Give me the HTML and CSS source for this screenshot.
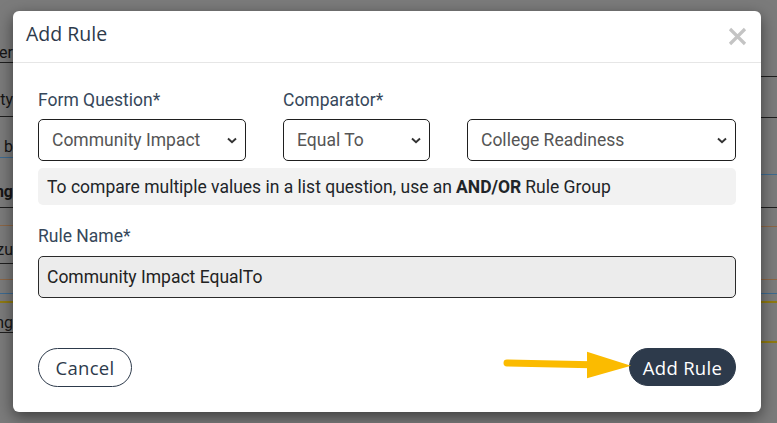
FILE: index.html
```html
<!DOCTYPE html>
<html lang="en">
<head>
  <meta charset="UTF-8" />
  <meta name="viewport" content="width=device-width, initial-scale=1.0"/>
  <title>Add Rule</title>
  <link rel="stylesheet" href="styles.css">
</head>
<body>

  <!-- page behind the dialog, mostly hidden -->
  <div class="page">
    <div class="col col-left">
      <div class="row r1"><span>Number</span></div>
      <div class="row r2"><span>County</span></div>
      <div class="row r3 blue"><span>To b</span></div>
      <div class="row r4"><b>Pending</b></div>
      <div class="row r5 orange"></div>
      <div class="row r6"><span>Azu</span></div>
      <div class="row r7 orange"></div>
      <div class="row r8 blue"></div>
      <div class="row r9 yellow"></div>
      <div class="row r10"><span>Pending</span></div>
    </div>
    <div class="col col-right">
      <div class="row q1"></div>
      <div class="row q2"></div>
      <div class="row q3 blue"></div>
      <div class="row q4"></div>
      <div class="row q5 orange"></div>
      <div class="row q6 orange"></div>
      <div class="row q7 blue"></div>
      <div class="row q8 yellow"></div>
      <div class="row q9 yellow"></div>
    </div>
  </div>

  <div class="modal">
    <div class="modal-header">
      <h4 class="modal-title">Add Rule</h4>
      <svg class="close" width="19" height="19" viewBox="0 0 19 19">
        <path d="M2 2 L17 17 M17 2 L2 17" stroke="#c4c4c4" stroke-width="3.2" />
      </svg>
    </div>

    <div class="modal-body">
      <div class="fields">
        <label class="label">Form Question*</label>
        <label class="label">Comparator*</label>
        <label class="label"></label>

        <div class="select">
          <span>Community Impact</span>
          <svg width="10" height="7" viewBox="0 0 10 7"><path d="M1 1.5 L5 5.3 L9 1.5" fill="none" stroke="#333" stroke-width="1.9"/></svg>
        </div>
        <div class="select">
          <span>Equal To</span>
          <svg width="10" height="7" viewBox="0 0 10 7"><path d="M1 1.5 L5 5.3 L9 1.5" fill="none" stroke="#333" stroke-width="1.9"/></svg>
        </div>
        <div class="select">
          <span>College Readiness</span>
          <svg width="10" height="7" viewBox="0 0 10 7"><path d="M1 1.5 L5 5.3 L9 1.5" fill="none" stroke="#333" stroke-width="1.9"/></svg>
        </div>
      </div>

      <div class="hint">To compare multiple values in a list question, use an <strong>AND/OR</strong> Rule Group</div>

      <label class="label name-label">Rule Name*</label>
      <div class="text-input">Community Impact EqualTo</div>
    </div>

    <div class="modal-footer">
      <button class="btn btn-outline">Cancel</button>
      <button class="btn btn-dark">Add Rule</button>

      <svg class="arrow" width="134" height="30" viewBox="0 0 134 30">
        <path d="M4 12 L88 13.7" stroke="#fbbb00" stroke-width="7" stroke-linecap="round" />
        <polygon points="84,0.7 128,14.7 84,27.3" fill="#fbbb00" />
      </svg>
    </div>
  </div>

</body>
</html>
```

FILE: styles.css
```css
body {
  margin: 0;
  width: 777px;
  height: 423px;
  overflow: hidden;
  background-color: #7b7b7b;
  font-family: Roboto, 'Liberation Sans', sans-serif;
  position: relative;
}

/* page behind the dialog */
.page {
  display: flex;
  justify-content: space-between;
  height: 423px;
}

.col {
  width: 16px;
  display: flex;
  flex-direction: column;
}

.col-left {
  width: 13px;
  overflow: hidden;
}

.row {
  box-sizing: border-box;
  border-bottom: 1px solid #1e1e1e;
  display: flex;
  align-items: flex-end;
  justify-content: flex-end;
  font-size: 16px;
  color: #151515;
  white-space: nowrap;
  flex-shrink: 0;
}

.row.blue { border-bottom-color: #3d6a90; }
.row.orange { border-bottom-color: #8c6646; }
.row.yellow { border-bottom: 2px solid #8f7a12; }

.r1 { height: 63px; padding-bottom: 0; }
.r2 { height: 54px; padding-bottom: 7px; }
.r3 { height: 41px; padding-bottom: 1px; }
.r4 { height: 50px; padding-bottom: 6px; }
.r5 { height: 18px; }
.r6 { height: 38px; padding-bottom: 4px; }
.r7 { height: 16px; }
.r8 { height: 14px; }
.r9 { height: 9px; }
.r10 { height: 30px; padding-bottom: 0; }

.q1 { height: 77px; }
.q2 { height: 41px; }
.q3 { height: 57px; }
.q4 { height: 33px; }
.q5 { height: 19px; }
.q6 { height: 53px; }
.q7 { height: 14px; }
.q8 { height: 9px; }
.q9 { height: 40px; }

/* dialog */
.modal {
  position: absolute;
  left: 13px;
  top: 11px;
  width: 748px;
  height: 401px;
  box-sizing: border-box;
  background-color: #ffffff;
  border-radius: 6px;
  box-shadow: 0 5px 15px rgba(0,0,0,0.5);
  display: flex;
  flex-direction: column;
}

.modal-header {
  display: flex;
  justify-content: space-between;
  align-items: center;
  padding: 9px 14px 14px 13px;
  border-bottom: 1px solid #e6e6e6;
}

.modal-title {
  margin: 0;
  font-family: 'Open Sans', sans-serif;
  font-weight: 400;
  font-size: 19.5px;
  line-height: 28px;
  color: #2d3a4b;
}

.close {
  margin-top: 5px;
}

.modal-body {
  padding: 25px 25px 0;
}

.fields {
  display: grid;
  grid-template-columns: 208px 147px 1fr;
  column-gap: 37px;
  row-gap: 7px;
}

.label {
  display: block;
  font-size: 17.5px;
  line-height: 24px;
  color: #36475a;
}

.select {
  height: 42px;
  box-sizing: border-box;
  border: 1px solid #1f1f1f;
  border-radius: 5px;
  padding: 0 8px 0 13px;
  display: flex;
  align-items: center;
  justify-content: space-between;
  font-size: 17.5px;
  color: #555555;
}

.hint {
  margin-top: 7px;
  height: 37px;
  box-sizing: border-box;
  background-color: #f2f2f2;
  border-radius: 5px;
  padding: 0 9px;
  display: flex;
  align-items: center;
  gap: 4px;
  font-size: 17.5px;
  color: #212529;
}

.hint strong {
  font-weight: 700;
}

.name-label {
  margin-top: 19px;
  margin-bottom: 8px;
}

.text-input {
  height: 42px;
  box-sizing: border-box;
  border: 1px solid #2a2a2a;
  border-radius: 5px;
  background-color: #ececec;
  padding: 0 8px;
  display: flex;
  align-items: center;
  font-size: 17.5px;
  color: #222222;
}

.modal-footer {
  position: relative;
  display: flex;
  justify-content: space-between;
  align-items: flex-start;
  padding: 50px 25px 0;
}

.btn {
  font-family: 'Open Sans', sans-serif;
  font-size: 18.5px;
  letter-spacing: 0.3px;
  height: 39px;
  padding: 0;
  border-radius: 20px;
  cursor: pointer;
}

.btn-outline {
  width: 94px;
  background-color: #ffffff;
  border: 1px solid #2d3a4b;
  color: #2d3a4b;
}

.btn-dark {
  width: 107px;
  height: 38px;
  background-color: #2d3a4b;
  border: 1px solid #2d3a4b;
  color: #ffffff;
}

.arrow {
  position: absolute;
  left: 490px;
  top: 53px;
}
```
